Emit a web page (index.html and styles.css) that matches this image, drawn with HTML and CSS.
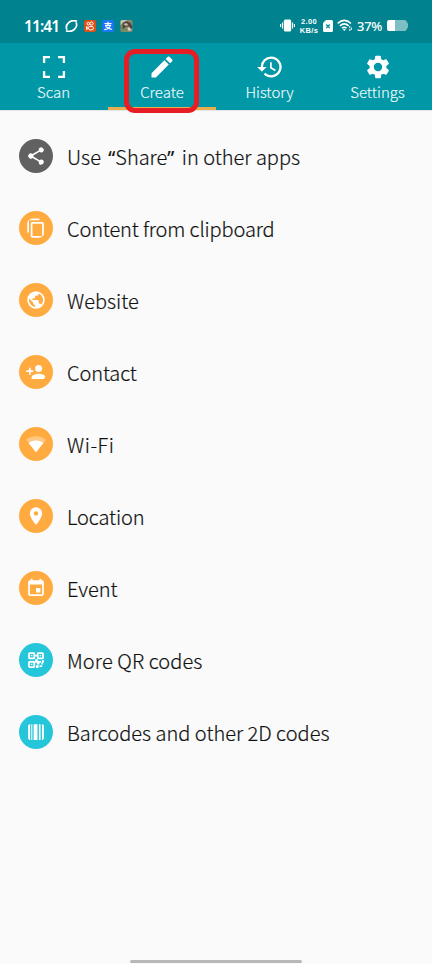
FILE: index.html
```html
<!DOCTYPE html>
<html lang="en">
<head>
<meta charset="utf-8">
<title>Create</title>
<link rel="stylesheet" href="styles.css">
</head>
<body>
<header class="status">
  <div class="status-left">
    <span class="clock">11:41</span>
    <svg width="13" height="12" viewBox="0 0 13 12"><path d="M11.900 1.200C9.300.3 5.500.8 3.400 2.900 1.500 4.700 1 7.600 1.900 9.600M1.100 10.800c2.600.9 6.400.4 8.500-1.700 1.900-1.800 2.400-4.700 1.500-6.700" fill="none" stroke="#fff" stroke-width="1.700"/><path d="M12.800.3L10.500 3 11 1.500zM.2 11.700L2.500 9 2 10.500z"/></svg>
    <svg width="12" height="12" viewBox="0 0 12 12"><rect width="12" height="12" rx="2" fill="#dc4f17"/><g fill="none" stroke="#fff" stroke-width="1"><circle cx="4.300" cy="3.700" r="1.300"/><circle cx="7.500" cy="3.500" r="1.600"/><rect x="4.700" y="6.400" width="4.500" height="3.400" rx="1"/><path d="M2.600 6.600l2 1.500-2 1.500z"/></g></svg>
    <svg width="12" height="12" viewBox="0 0 12 12"><rect width="12" height="12" rx="2" fill="#1878f4"/><path d="M2.500 3.500h7M6 1.800v3.500M3 5.400h5.500C7.500 8 5.500 9.600 2.300 9.700M3.500 6.700c2 .4 3.500 1.800 6.300 2.700" fill="none" stroke="#fff" stroke-width="1.200"/></svg>
    <svg width="13" height="12" viewBox="0 0 12 12"><rect width="12" height="12" rx="1.500" fill="#8a8770"/><path d="M0 1.500Q0 0 1.500 0H7L3 3 0 5z" fill="#b9c4b4"/><path d="M2 3l4-2 4 2 2 4-2 3-2-4-3 1-3 3z" fill="#4f453a"/><path d="M3 4l3-1 2 2-3 1z" fill="#c9b79c"/><path d="M1 9l4-1 2 3H1z" fill="#6e9050"/><path d="M7 8l2-1 2 3-3 1z" fill="#d5d2c4"/></svg>
  </div>
  <div class="status-right">
    <svg width="15" height="13" viewBox="0 0 15 13"><rect x="3.800" y=".5" width="7.400" height="12" rx="1.500"/><rect x="1.900" y="3.500" width="1.100" height="6"/><rect x="12" y="3.500" width="1.100" height="6"/><rect x="0" y="5" width="1.100" height="3"/><rect x="13.900" y="5" width="1.100" height="3"/></svg>
    <div class="rate"><span>2.00</span><span>KB/s</span></div>
    <svg width="10" height="12" viewBox="0 0 10 12"><path d="M3 0h5.500Q10 0 10 1.500v9Q10 12 8.500 12h-7Q0 12 0 10.500V3z"/><path d="M3.200 4.500l3.600 3.600M6.800 4.500L3.200 8.100" stroke="#00838f" stroke-width="1.300"/></svg>
    <svg width="16" height="13" viewBox="0 0 16 13"><g fill="none" stroke="#fff" stroke-width="1.500"><path d="M.7 4.400q6.600-6 13.200 0M2.900 6.900q4.400-4 8.800 0M5 9.200q2.300-2 4.600 0"/></g><path d="M5.800 10.200q1.500-1 3 0L7.300 12z"/><path d="M12.800 7v2M12.800 10v2M14.300 8.500v2.500" stroke="#fff"/></svg>
    <span class="percent">37%</span>
    <svg width="21" height="11" viewBox="0 0 21 11"><path d="M2.500 0h15q1.500 0 2.200 1.500L21 4v3l-1.300 2.500q-.7 1.500-2.200 1.500h-15Q0 11 0 8.500v-6Q0 0 2.500 0" fill="#7ebfc5"/><path d="M2.500 0H8v11H2.500Q0 11 0 8.500v-6Q0 0 2.500 0"/></svg>
  </div>
</header>
<nav class="tabs">
  <a class="tab"><svg viewBox="0 0 24 24" width="28" height="28"><path d="M3.500 8.500V3.500h5M15.500 3.500H20.500v5M20.500 15.500v5h-5M8.500 20.500h-5v-5" fill="none" stroke="#fff" stroke-width="2"/></svg><span>Scan</span></a>
  <a class="tab active"><svg viewBox="0 0 24 24" width="28" height="28"><path d="M3 17.250V21h3.750L17.810 9.940l-3.750-3.750L3 17.250zM20.710 7.040a1 1 0 0 0 0-1.410l-2.340-2.340a1 1 0 0 0-1.410 0l-1.830 1.830 3.750 3.750z"/></svg><span>Create</span></a>
  <a class="tab"><svg viewBox="0 0 24 24" width="28" height="28"><path d="M13 3a9 9 0 0 0-9 9H1l3.890 3.890.07.14L9 12H6a7 7 0 1 1 2.060 4.940l-1.420 1.420A9 9 0 1 0 13 3zm-1 5v5l4.280 2.540.72-1.210-3.500-2.080V8z"/></svg><span>History</span></a>
  <a class="tab"><svg viewBox="0 0 24 24" width="28" height="28"><path d="M19.140 12.940c.04-.3.06-.61.06-.94s-.02-.64-.07-.94l2.030-1.580a.49.49 0 0 0 .12-.61l-1.920-3.320a.49.49 0 0 0-.59-.22l-2.390.96a7 7 0 0 0-1.620-.94l-.36-2.540A.48.48 0 0 0 13.920 2.400h-3.840a.47.47 0 0 0-.47.41l-.36 2.540a7.400 7.400 0 0 0-1.620.94l-2.390-.96a.48.48 0 0 0-.59.22L2.740 8.870a.48.48 0 0 0 .12.61l2.030 1.580a6.500 6.500 0 0 0 0 1.880l-2.030 1.580a.49.49 0 0 0-.12.61l1.920 3.320c.12.22.37.29.59.22l2.390-.96c.5.380 1.030.7 1.620.94l.36 2.540c.05.240.24.410.48.410h3.840c.24 0 .44-.17.47-.41l.36-2.540a7.400 7.400 0 0 0 1.620-.94l2.390.96c.22.080.47 0 .59-.22l1.920-3.320a.47.47 0 0 0-.12-.61zM12 15.600a3.600 3.600 0 1 1 0-7.200 3.600 3.600 0 0 1 0 7.200z"/></svg><span>Settings</span></a>
</nav>
<main class="list">
  <div class="row"><svg class="badge gray" viewBox="0 0 24 24"><path d="M18 16.080c-.76 0-1.440.3-1.960.77L8.910 12.700c.05-.23.09-.46.09-.7s-.04-.47-.09-.7l7.050-4.110A3 3 0 1 0 15 5c0 .24.04.47.09.7L8.040 9.810a3 3 0 1 0 0 4.380l7.120 4.160c-.05.21-.08.43-.08.650a2.920 2.920 0 1 0 2.920-2.920z"/></svg><span class="share">Use <span class="quote open">“</span>Share<span class="quote close">”</span> in other apps</span></div>
  <div class="row"><svg class="badge" viewBox="0 0 24 24"><path d="M16 1H4a2 2 0 0 0-2 2v14h2V3h12zm3 4H8a2 2 0 0 0-2 2v14c0 1.100.9 2 2 2h11a2 2 0 0 0 2-2V7a2 2 0 0 0-2-2zm0 16H8V7h11z"/></svg><span class="clipboard">Content from clipboard</span></div>
  <div class="row"><svg class="badge" viewBox="0 0 24 24"><path d="M12 2a10 10 0 1 0 0 20 10 10 0 0 0 0-20zm-1 17.930A7.990 7.990 0 0 1 4.210 10.210L9 15v1a2 2 0 0 0 2 2zm6.900-2.540A2 2 0 0 0 16 16h-1v-3a1 1 0 0 0-1-1H8v-2h2a1 1 0 0 0 1-1V7h2a2 2 0 0 0 2-2v-.41a8 8 0 0 1 2.900 12.800z"/></svg><span>Website</span></div>
  <div class="row"><svg class="badge" viewBox="0 0 24 24"><path d="M15 12a4 4 0 1 0 0-8 4 4 0 0 0 0 8zm-9-2V7H4v3H1v2h3v3h2v-3h3v-2zm9 4c-2.670 0-8 1.340-8 4v2h16v-2c0-2.660-5.330-4-8-4z"/></svg><span class="contact">Contact</span></div>
  <div class="row"><svg class="badge" viewBox="0 0 24 24"><path opacity=".35" d="M12.010 21.490L23.640 7c-.45-.34-4.930-4-11.640-4S.81 6.660.36 7z"/><path d="M3.500 10.900l8.500 10.600 8.500-10.600S17.400 8 12 8s-8.500 2.900-8.500 2.900z"/></svg><span class="network">Wi-Fi</span></div>
  <div class="row"><svg class="badge" viewBox="0 0 24 24"><path d="M12 2a7 7 0 0 0-7 7c0 5.250 7 13 7 13s7-7.750 7-13a7 7 0 0 0-7-7zm0 9.500a2.500 2.500 0 1 1 0-5 2.500 2.500 0 0 1 0 5z"/></svg><span class="contact">Location</span></div>
  <div class="row"><svg class="badge" viewBox="0 0 24 24"><path d="M17 12h-5v5h5zM16 1v2H8V1H6v2H5a2 2 0 0 0-2 2v14c0 1.100.9 2 2 2h14a2 2 0 0 0 2-2V5a2 2 0 0 0-2-2h-1V1zm3 18H5V8h14z"/></svg><span>Event</span></div>
  <div class="row"><svg class="badge cyan" viewBox="0 0 24 24"><path fill-rule="evenodd" d="M4 3h6l1 1v6l-1 1H4l-1-1V4zm1 2v4h4V5zM14 3h6l1 1v6l-1 1h-6l-1-1V4zm1 2v4h4V5zM4 13h6l1 1v6l-1 1H4l-1-1v-6zm1 2v4h4v-4zM6.200 6.200h1.600v1.600H6.200zM16.200 6.200h1.600v1.600h-1.600zM6.200 16.200h1.600v1.600H6.200zM11 6h2v2h-2zM11 11h3v2h4v2h-2v2h-3v-2h-2zM19 12h2v3h-2zM18 15h2v2h-2zM12 18h3v3h-3zM16 18h3v2h-3z"/></svg><span class="qr">More QR codes</span></div>
  <div class="row"><svg class="badge cyan" viewBox="0 0 24 24"><path d="M4.500 3h.8v18h-.8Q3 21 3 19.500v-15Q3 3 4.500 3zM6.600 3h1.200v18H6.600zM9.300 3h4.400v18H9.300zM15.300 3h1.900v18h-1.900zM18.800 3h.7Q21 3 21 4.500v15q0 1.500-1.500 1.500h-.7z"/></svg><span>Barcodes and other 2D codes</span></div>
</main>
<div class="home"></div>
<div class="highlight"></div>
</body>
</html>
```
FILE: styles.css
```css
* { box-sizing: border-box; }
body {
  margin: 0;
  height: 964px;
  overflow: hidden;
  position: relative;
  display: flex;
  flex-direction: column;
  background: #fafafa;
  color: #111;
  font-family: "Noto Sans CJK SC", "Noto Sans", sans-serif;
  font-weight: 300;
}
svg { display: block; flex: none; fill: #fff; }
.status {
  height: 43px;
  flex: none;
  background: #00838f;
  color: #fff;
  display: flex;
  justify-content: space-between;
  padding: 9px 24px 0;
}
.status-left, .status-right { height: 33px; display: flex; align-items: center; }
.status-left { gap: 6px; }
.status-right { gap: 4px; }
.clock { font: 600 15.5px/20px "Noto Sans", sans-serif; width: 35px; white-space: nowrap; letter-spacing: -.9px; }
.rate { font: 600 7.5px/9px "Liberation Sans", sans-serif; width: 20px; display: flex; flex-direction: column; align-items: center; white-space: nowrap; letter-spacing: .4px; }
.percent { font: 500 13px/18px "Noto Sans", sans-serif; width: 26px; padding-top: 1px; white-space: nowrap; letter-spacing: -.3px; }
.tabs { height: 67px; flex: none; display: grid; grid-template-columns: repeat(4, 1fr); background: #0097a7; }
.tab {
  display: flex;
  flex-direction: column;
  align-items: center;
  padding: 10px 1px 0 0;
  color: #f0fafa;
  font-size: 15px;
  line-height: 22px;
  -webkit-text-stroke: .15px currentColor;
}
.active { padding-right: 0; border-bottom: 3px solid #e9ae50; }
.list { padding-top: 10px; box-shadow: inset 0 2px 1px -1px #e4e4e4; }
.row { height: 72px; display: flex; align-items: center; gap: 14px; padding-left: 19px; font-size: 20px; line-height: 28px; white-space: nowrap; }
.row > span { padding-top: 2px; -webkit-text-stroke: .2px currentColor; }
.row > .clipboard { letter-spacing: -.14px; }
.row > .contact { letter-spacing: -.12px; }
.row > .network { letter-spacing: .55px; }
.row > .qr { letter-spacing: .1px; }
.quote { font-family: "Open Sans", sans-serif; font-weight: 400; }
.open { margin-left: 3px; }
.close { margin-right: 3px; }
.badge { width: 34px; height: 34px; border-radius: 50%; padding: 6.500px; background: #ffab40; }
.gray { background: #616161; }
.cyan { background: #26c6da; }
.home { position: absolute; left: 130px; bottom: 1px; width: 172px; height: 3px; border-radius: 2px; background: #b8b8b8; }
.highlight { position: absolute; left: 124px; top: 49px; width: 75px; height: 64px; border: 5px solid #e71d25; border-radius: 11px; }
```
